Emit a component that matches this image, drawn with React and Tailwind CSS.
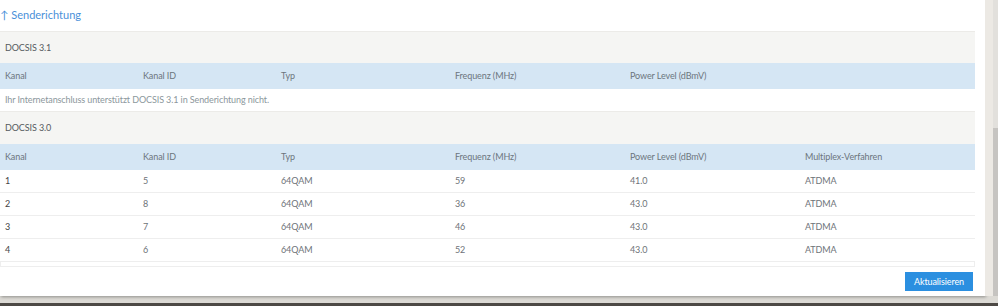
import React from "react";

const COLS = ["w-[138px]", "w-[138px]", "w-[174px]", "w-[175px]", "w-[175px]", "w-[175px]"];
const HEAD = ["Kanal", "Kanal ID", "Typ", "Frequenz (MHz)", "Power Level (dBmV)", "Multiplex-Verfahren"];

const rows = [
  ["1", "5", "64QAM", "59", "41.0", "ATDMA"],
  ["2", "8", "64QAM", "36", "43.0", "ATDMA"],
  ["3", "7", "64QAM", "46", "43.0", "ATDMA"],
  ["4", "6", "64QAM", "52", "43.0", "ATDMA"],
];

function HeaderRow({ cols }) {
  return (
    <div className="flex h-[26px] items-center bg-[#d5e6f4] text-[#6c757d]">
      {cols.map((c, i) => (
        <div key={i} className={`${COLS[i]} pl-[5px] truncate`}>{c}</div>
      ))}
    </div>
  );
}

function SectionTitle({ children, tall }) {
  return (
    <div
      className={`flex ${tall ? "h-[33px]" : "h-[32px]"} items-center border-t border-[#ecebe8] bg-[#f5f5f3] pl-[5px] text-[#555b60]`}
    >
      {children}
    </div>
  );
}

export default function App() {
  return (
    <div
      className="relative w-[998px] h-[306px] overflow-hidden bg-[#ebe8e3] text-[9px] tracking-[-0.1px]"
      style={{ fontFamily: "Lato, 'Open Sans', sans-serif" }}
    >
      <div className="flex h-[296px]">
        <div className="w-[985px] h-[296px] bg-white shadow-[1px_1px_3px_rgba(0,0,0,0.35)] pr-[10px]">
          <div className="h-[31px] flex items-center text-[11px] tracking-normal text-[#4a90d9]">
            <span className="mr-[3px]">↑</span>Senderichtung
          </div>
          <div className="w-[975px]">
            <SectionTitle>DOCSIS 3.1</SectionTitle>
            <HeaderRow cols={HEAD.slice(0, 5)} />
            <div className="flex h-[22px] items-center pl-[5px] text-[#8c979c]">
              Ihr Internetanschluss unterstützt DOCSIS 3.1 in Senderichtung nicht.
            </div>
            <SectionTitle tall>DOCSIS 3.0</SectionTitle>
            <HeaderRow cols={HEAD} />
            {rows.map((r, ri) => (
              <div key={ri} className="flex h-[23px] items-center border-b border-[#eeeeee] text-[#6e7378]">
                {r.map((c, i) => (
                  <div key={i} className={`${COLS[i]} pl-[5px] ${i === 0 ? "text-[#444]" : ""}`}>{c}</div>
                ))}
              </div>
            ))}
            <div className="h-[4px] border-r border-l border-[#eeeeee]" />
          </div>
          <div className="border-t border-[#eeeeee] flex justify-end pt-[5px]">
            <button className="h-[19px] w-[68px] bg-[#2b8fe0] text-white text-[9px] mr-[2px]">
              Aktualisieren
            </button>
          </div>
        </div>
        <div className="w-[8px] h-full bg-[#ece9e4]" />
        <div className="flex-1 h-full bg-[#e2e0dc] flex flex-col">
          <div className="h-[128px]" />
          <div className="flex-1 bg-[#c6c4c1]" />
        </div>
      </div>
      <div className="h-[7px] bg-[#dcdad5]" />
      <div className="h-[3px] bg-[#4d4945]" />
    </div>
  );
}
